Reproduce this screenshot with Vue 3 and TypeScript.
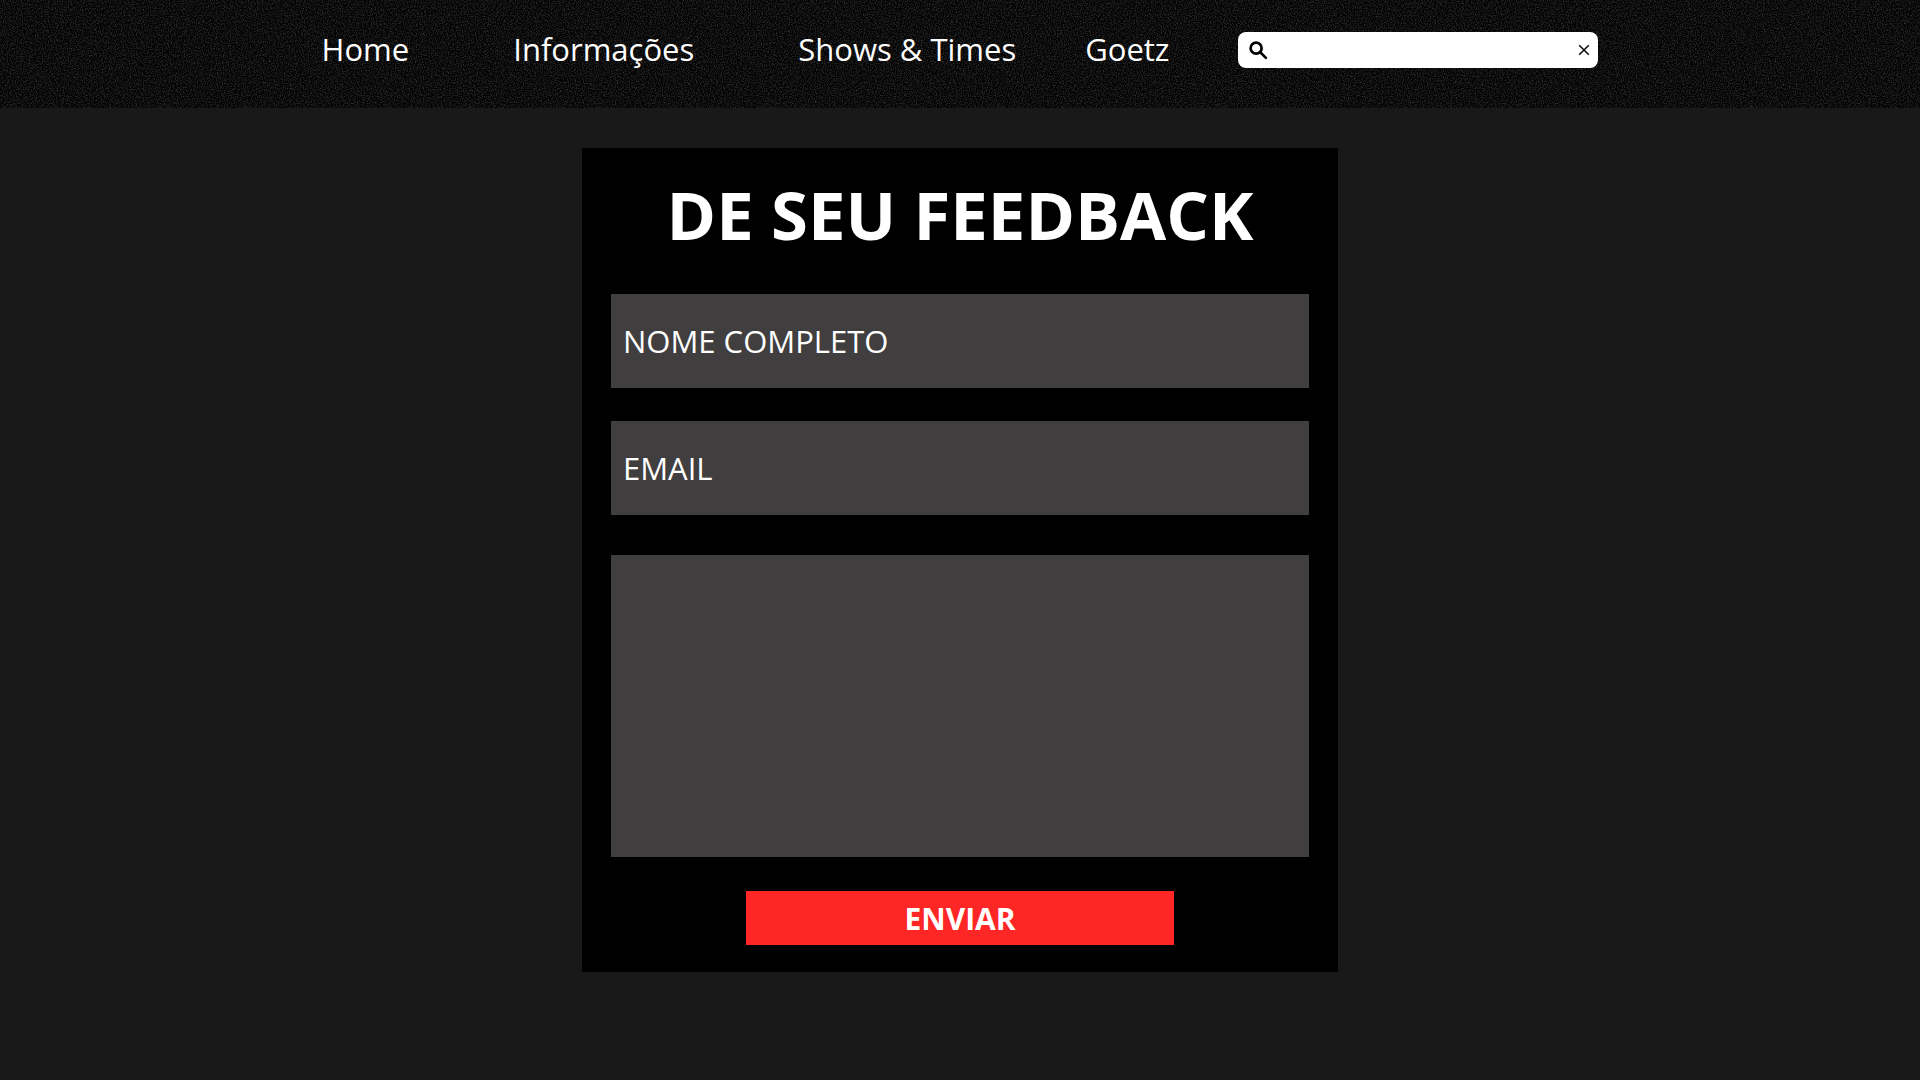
<script setup lang="ts">
import { reactive, ref } from 'vue'

interface NavLink {
  label: string
  href: string
}

const links: NavLink[] = [
  { label: 'Home', href: '#home' },
  { label: 'Informações', href: '#informacoes' },
  { label: 'Shows & Times', href: '#shows' },
]

const search = ref<string>('')
const form = reactive({ name: '', email: '', message: '' })
</script>

<template>
  <div class="page">
    <header class="topbar">
      <svg class="grain" aria-hidden="true">
        <filter id="grain" x="0" y="0" width="100%" height="100%" color-interpolation-filters="sRGB">
          <feTurbulence type="fractalNoise" baseFrequency="0.85" numOctaves="3" seed="4" />
          <feColorMatrix
            type="matrix"
            values="0.4 0 0 0 -0.147  0.4 0 0 0 -0.147  0.4 0 0 0 -0.147  0 0 0 0 1"
          />
        </filter>
        <rect width="100%" height="100%" filter="url(#grain)" />
      </svg>
      <div class="bar">
        <nav class="links" aria-label="Principal">
          <a v-for="link in links" :key="link.href" :href="link.href">{{ link.label }}</a>
        </nav>
        <a href="#goetz">Goetz</a>
        <form class="search" role="search" @submit.prevent>
          <svg class="lens" viewBox="0 0 20 20" aria-hidden="true">
            <circle cx="7.5" cy="7.5" r="5.8" />
            <path d="M11.8 11.8L17.8 17.8" />
          </svg>
          <input v-model="search" type="text" aria-label="Buscar" />
          <button type="button" aria-label="Limpar" @click="search = ''">
            <svg viewBox="0 0 12 12" aria-hidden="true">
              <path d="M1.2 1.2L10.8 10.8M10.8 1.2L1.2 10.8" />
            </svg>
          </button>
        </form>
      </div>
    </header>

    <main>
      <form class="card" @submit.prevent>
        <h1>DE SEU FEEDBACK</h1>
        <input v-model="form.name" class="field" type="text" placeholder="NOME COMPLETO" aria-label="Nome completo" />
        <input v-model="form.email" class="field" type="email" placeholder="EMAIL" aria-label="Email" />
        <textarea v-model="form.message" class="field message" aria-label="Mensagem"></textarea>
        <button class="send" type="submit">ENVIAR</button>
      </form>
    </main>
  </div>
</template>

<style>
body {
  margin: 0;
  background: #191919;
}
</style>

<style scoped>
.page {
  min-height: 100vh;
  background: #191919;
  color: #fff;
  font-family: 'Open Sans', 'Noto Sans', sans-serif;
  font-size: 31px;
}

.page * {
  box-sizing: border-box;
}

.topbar {
  position: relative;
  padding: 32px 24px 40px;
  background: #0e0e0e;
}

.grain {
  position: absolute;
  inset: 0;
  width: 100%;
  height: 100%;
}

.bar {
  position: relative;
  display: flex;
  flex-wrap: wrap;
  justify-content: center;
  align-items: flex-start;
  gap: 16px 69px;
  line-height: 34px;
}

.links {
  display: flex;
  flex-wrap: wrap;
  gap: 16px 104px;
}

.bar a {
  color: #fff;
  text-decoration: none;
}

.search {
  display: flex;
  align-items: center;
  width: 360px;
  height: 36px;
  padding: 0 8px 0 11px;
  border-radius: 8px;
  background: #fff;
}

.lens {
  flex: none;
  width: 19px;
  height: 19px;
  fill: none;
  stroke: #000;
  stroke-width: 2.8;
  stroke-linecap: round;
}

.search input {
  flex: 1;
  min-width: 0;
  padding: 0 8px;
  border: 0;
  outline: 0;
  background: none;
  color: #000;
  font: inherit;
  font-size: 20px;
}

.search button {
  display: flex;
  flex: none;
  padding: 0;
  border: 0;
  background: none;
}

.search button svg {
  width: 12px;
  height: 12px;
  fill: none;
  stroke: #101018;
  stroke-width: 1.6;
}

main {
  padding: 40px 24px;
}

.card {
  display: flex;
  flex-direction: column;
  max-width: 756px;
  margin: 0 auto;
  padding: 20px 29px 27px;
  background: #000;
}

h1 {
  margin: 0 0 34px;
  font-size: 67px;
  line-height: 92px;
  font-weight: 700;
  text-align: center;
}

.field {
  display: block;
  width: 100%;
  height: 94px;
  margin: 0 0 33px;
  padding: 0 12px;
  border: 0;
  border-radius: 0;
  outline: 0;
  background: #413e3f;
  color: #fff;
  font: inherit;
}

.field::placeholder {
  color: #fff;
  opacity: 1;
}

.message {
  height: 302px;
  margin: 7px 0 34px;
  padding: 12px;
  resize: none;
}

.send {
  align-self: center;
  width: 428px;
  max-width: 100%;
  height: 54px;
  padding: 0;
  border: 0;
  background: #ff2626;
  color: #fff;
  font: inherit;
  font-size: 30px;
  font-weight: 700;
}
</style>
